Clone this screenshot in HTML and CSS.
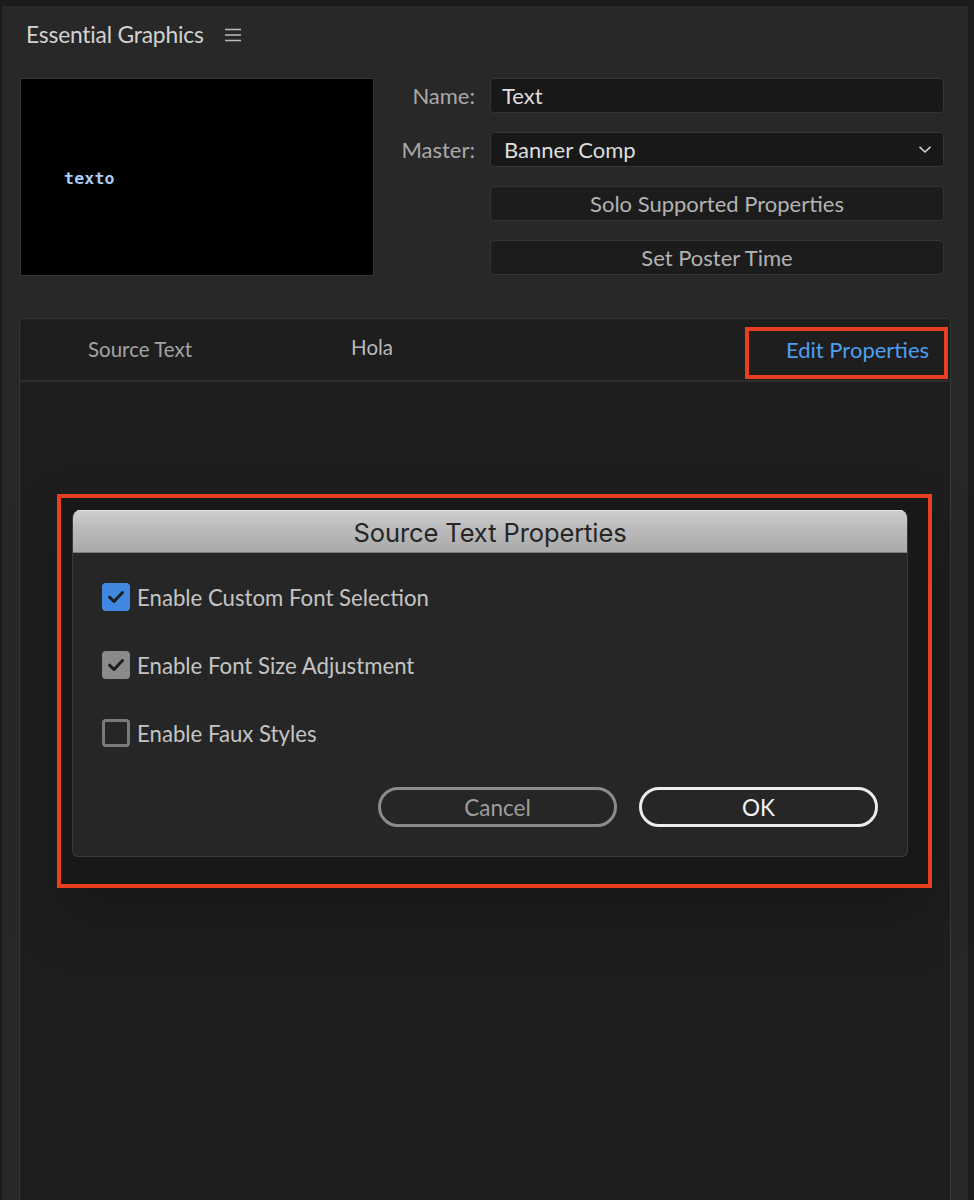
FILE: index.html
```html
<!DOCTYPE html>
<html lang="en">
<head>
<meta charset="utf-8">
<title>Essential Graphics</title>
<link rel="stylesheet" href="styles.css">
</head>
<body>
<div class="panel">
  <header class="panel-header">
    <h1 class="panel-title">Essential Graphics</h1>
    <svg class="menu-icon" width="18" height="14" viewBox="0 0 18 14" aria-hidden="true">
      <path d="M1 1.5H17M1 7H17M1 12.5H17" stroke="#bdbdbd" stroke-width="1.6" fill="none"/>
    </svg>
  </header>

  <section class="top">
    <div class="preview"><span class="preview-text">texto</span></div>
    <div class="fields">
      <span class="field-label">Name:</span>
      <div class="text-input">Text</div>
      <span class="field-label">Master:</span>
      <div class="select">
        <span>Banner Comp</span>
        <svg class="chevron" width="14" height="9" viewBox="0 0 14 9" aria-hidden="true">
          <path d="M1.5 1.8L7 7L12.5 1.8" stroke="#cfcfcf" stroke-width="1.6" fill="none"/>
        </svg>
      </div>
      <span></span>
      <button class="wide-btn">Solo Supported Properties</button>
      <span></span>
      <button class="wide-btn">Set Poster Time</button>
    </div>
  </section>

  <div class="splitter"><span class="splitter-line"></span></div>

  <section class="tabs-panel">
    <nav class="tabs">
      <span class="tab tab-source">Source Text</span>
      <span class="tab tab-hola">Hola</span>
      <span class="tab tab-edit"><span>Edit Properties</span></span>
    </nav>
    <div class="tab-content">
      <div class="highlight-box">
        <div class="dialog">
          <div class="dialog-title">Source Text Properties</div>
          <div class="dialog-body">
            <div class="option">
              <span class="checkbox checkbox-on">
                <svg width="18" height="14" viewBox="0 0 18 14" aria-hidden="true"><path d="M2.5 7.2L7 11.5L15.5 2.5" stroke="#1e1e1e" stroke-width="3" fill="none" stroke-linecap="round" stroke-linejoin="round"/></svg>
              </span>
              <span class="option-label">Enable Custom Font Selection</span>
            </div>
            <div class="option">
              <span class="checkbox checkbox-dim">
                <svg width="18" height="14" viewBox="0 0 18 14" aria-hidden="true"><path d="M2.5 7.2L7 11.5L15.5 2.5" stroke="#1e1e1e" stroke-width="3" fill="none" stroke-linecap="round" stroke-linejoin="round"/></svg>
              </span>
              <span class="option-label">Enable Font Size Adjustment</span>
            </div>
            <div class="option">
              <span class="checkbox checkbox-off"></span>
              <span class="option-label">Enable Faux Styles</span>
            </div>
            <div class="dialog-actions">
              <button class="pill pill-cancel">Cancel</button>
              <button class="pill pill-ok">OK</button>
            </div>
          </div>
        </div>
      </div>
    </div>
  </section>
</div>
</body>
</html>
```

FILE: styles.css
```css
* { box-sizing: border-box; }

html, body {
  margin: 0;
  padding: 0;
  height: 100%;
  overflow: hidden;
}

body {
  background: #1c1c1c;
  font-family: Lato, "Noto Sans", sans-serif;
  color: #cfcfcf;
}

.panel {
  margin: 6px 0 0 2px;
  width: 966px;
  height: calc(100vh - 6px);
  background: #282828;
  display: flex;
  flex-direction: column;
}

.panel-header {
  height: 56px;
  display: flex;
  align-items: center;
  padding-left: 24px;
  gap: 20px;
}

.panel-title {
  margin: 0;
  font-size: 22.8px;
  font-weight: 400;
  color: #d2d2d2;
  letter-spacing: -0.2px;
}

.menu-icon { display: block; margin-top: 1px; }

.top {
  display: flex;
  padding: 16px 24px 0 18px;
}

.preview {
  width: 354px;
  height: 198px;
  background: #000;
  border: 1px solid #363636;
  padding: 89px 0 0 43px;
}

.preview-text {
  font-family: "DejaVu Sans Mono", monospace;
  font-weight: bold;
  font-size: 16.5px;
  color: #a9cdf6;
  letter-spacing: 0.2px;
}

.fields {
  flex: 1;
  display: grid;
  grid-template-columns: 1fr 454px;
  grid-auto-rows: 35px;
  column-gap: 15px;
  row-gap: 19px;
  align-items: stretch;
}

.field-label {
  justify-self: end;
  align-self: center;
  font-size: 22px;
  color: #a9a9a9;
}

.text-input, .select, .wide-btn {
  background: #181818;
  border: 1px solid #343434;
  border-radius: 4px;
  font-family: Lato, "Noto Sans", sans-serif;
  font-size: 22px;
}

.text-input {
  display: flex;
  align-items: center;
  padding-left: 11px;
  color: #dedede;
}

.select {
  display: flex;
  align-items: center;
  justify-content: space-between;
  padding: 0 11px 0 13px;
  color: #dedede;
}

.chevron { display: block; }

.wide-btn {
  color: #b3b3b3;
  padding: 0;
  background: #1c1c1c;
}

.splitter {
  height: 42px;
  padding: 7px 0 0 319px;
}

.splitter-line {
  display: block;
  width: 1px;
  height: 29px;
  background: #242424;
}

.tabs-panel {
  flex: 1;
  margin: 0 17px;
  background: #1e1e1e;
  border: 1px solid #363636;
  border-bottom: none;
  border-radius: 5px 5px 0 0;
  display: flex;
  flex-direction: column;
}

.tabs {
  height: 63px;
  border-bottom: 2px solid #2d2d2d;
  display: flex;
  align-items: center;
  font-size: 20.5px;
}

.tab-source {
  margin-left: 68px;
  margin-top: -2px;
  color: #a3a3a3;
}

.tab-hola {
  margin-left: 159px;
  margin-top: -6px;
  color: #b9b9b9;
}

.tab-edit {
  margin-left: auto;
  margin-right: 2px;
  align-self: flex-start;
  margin-top: 8px;
  width: 203px;
  height: 52px;
  border: 4px solid #e8401f;
  display: flex;
  align-items: center;
  padding: 0 0 8px 37px;
  font-size: 22px;
  color: #4c9ff0;
}

.tab-content {
  flex: 1;
  padding: 112px 18px 0 37px;
}

.highlight-box {
  height: 394px;
  border: 4px solid #e8401f;
  background: #181818;
  padding: 12px 20px 0 11px;
  box-shadow: 0 30px 60px rgba(0, 0, 0, 0.22);
}

.dialog {
  height: 347px;
  background: #262626;
  border: 1px solid #3a3a3a;
  border-top: none;
  border-radius: 8px 8px 6px 6px;
  overflow: hidden;
  display: flex;
  flex-direction: column;
}

.dialog-title {
  height: 43px;
  background: linear-gradient(#d0d0d0, #bcbcbc 40%, #aaaaaa);
  border-bottom: 1px solid #7d7d7d;
  box-shadow: inset 0 1px 0 #e2e2e2;
  display: flex;
  align-items: center;
  justify-content: center;
  padding-top: 2px;
  font-family: Inter, "Liberation Sans", sans-serif;
  font-size: 25.5px;
  color: #262626;
  letter-spacing: -0.1px;
}

.dialog-body {
  flex: 1;
  padding: 30px 29px 0 29px;
}

.option {
  display: flex;
  align-items: center;
  height: 28px;
  margin-bottom: 40px;
  gap: 7px;
}

.checkbox {
  width: 28px;
  height: 28px;
  border-radius: 4px;
  display: flex;
  align-items: center;
  justify-content: center;
  flex-shrink: 0;
}

.checkbox svg { display: block; }

.checkbox-on { background: #4188e3; }
.checkbox-dim { background: #8a8a8a; }
.checkbox-off { border: 3px solid #7a7a7a; }

.option-label {
  font-size: 22.2px;
  color: #c4c4c4;
}

.dialog-actions {
  display: flex;
  justify-content: flex-end;
  gap: 22px;
}

.pill {
  width: 239px;
  height: 40px;
  border-radius: 20px;
  background: transparent;
  font-family: Lato, "Noto Sans", sans-serif;
  font-size: 22.5px;
  padding: 0;
}

.pill-cancel {
  border: 3px solid #8b8b8b;
  color: #9d9d9d;
}

.pill-ok {
  border: 3px solid #ececec;
  color: #f2f2f2;
}
```
